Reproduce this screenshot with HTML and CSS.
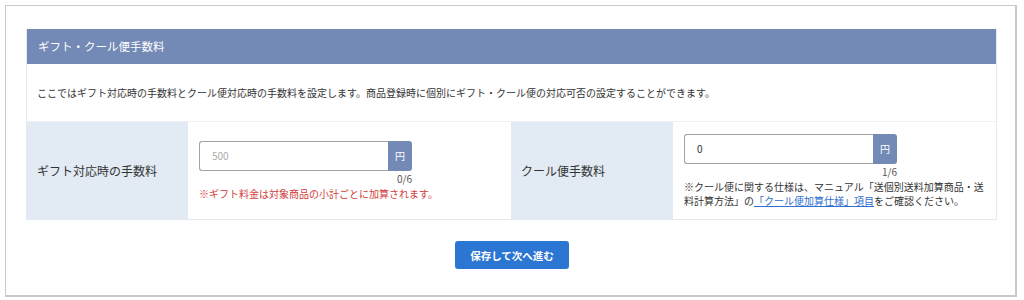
FILE: index.html
```html
<!DOCTYPE html>
<html lang="ja">
<head>
    <meta charset="UTF-8">
    <meta name="viewport" content="width=device-width, initial-scale=1.0">
    <title>ギフト・クール便手数料</title>
    <link rel="stylesheet" href="styles.css">
</head>
<body>
    <div class="frame">
        <!-- Fee settings panel -->
        <div class="panel">
            <div class="panel-head">ギフト・クール便手数料</div>
            <div class="panel-desc">ここではギフト対応時の手数料とクール便対応時の手数料を設定します。商品登録時に個別にギフト・クール便の対応可否の設定することができます。</div>
            <div class="fee-row">
                <div class="fee-label">ギフト対応時の手数料</div>
                <div class="fee-field">
                    <div class="field-box">
                        <div class="input-group">
                            <input type="text" class="fee-input" placeholder="500">
                            <span class="unit">円</span>
                        </div>
                        <div class="counter">0/6</div>
                    </div>
                    <p class="note note-red">※ギフト料金は対象商品の小計ごとに加算されます。</p>
                </div>
                <div class="fee-label">クール便手数料</div>
                <div class="fee-field">
                    <div class="field-box">
                        <div class="input-group">
                            <input type="text" class="fee-input" value="0">
                            <span class="unit">円</span>
                        </div>
                        <div class="counter">1/6</div>
                    </div>
                    <p class="note">※クール便に関する仕様は、マニュアル「送個別送料加算商品・送料計算方法」の<a href="#">「クール便加算仕様」項目</a>をご確認ください。</p>
                </div>
            </div>
        </div>

        <div class="actions">
            <button class="save-button">保存して次へ進む</button>
        </div>
    </div>
</body>
</html>
```

FILE: styles.css
```css
body {
    margin: 0;
    font-family: "Noto Sans CJK JP", "Noto Sans", sans-serif;
    color: #333;
    background: #fff;
}

.frame {
    margin: 5px;
    width: 1012px;
    height: 292px;
    border: 1px solid #c9c9c9;
    border-right-width: 2px;
    border-bottom-width: 2px;
    box-sizing: border-box;
    padding: 23px 20px 0 20px;
}

.panel {
    width: 971px;
    border: 1px solid #e6eaf0;
    border-top: none;
    box-sizing: border-box;
}

.panel-head {
    height: 35px;
    line-height: 35px;
    padding-left: 11px;
    background: #7389b6;
    color: #fff;
    font-size: 11.5px;
}

.panel-desc {
    height: 57px;
    line-height: 57px;
    padding-left: 10px;
    font-size: 10px;
    color: #333;
    border-bottom: 1px solid #eceff3;
    white-space: nowrap;
}

.fee-row {
    display: grid;
    grid-template-columns: 161px 323px 162px 1fr;
    height: 97px;
}

.fee-label {
    background: #e2ebf4;
    display: flex;
    align-items: center;
    padding-left: 10px;
    font-size: 12px;
    color: #333;
}

.fee-field {
    display: flex;
    flex-direction: column;
    justify-content: center;
    padding: 0 10px 0 11px;
}

.field-box {
    width: 213px;
}

.input-group {
    display: flex;
    height: 30px;
}

.fee-input {
    width: 189px;
    height: 30px;
    box-sizing: border-box;
    border: 1px solid #a3a3a3;
    border-right: none;
    border-radius: 3px 0 0 3px;
    padding: 0 12px;
    font-family: inherit;
    font-size: 10px;
    color: #333;
    outline: none;
}

.fee-input::placeholder {
    color: #aaa;
}

.unit {
    width: 24px;
    background: #7389b6;
    color: #fff;
    font-size: 10px;
    display: flex;
    align-items: center;
    justify-content: center;
    border-radius: 0 3px 3px 0;
}

.counter {
    text-align: right;
    font-size: 10px;
    color: #555;
    line-height: 16px;
}

.note {
    margin: 0;
    font-size: 10px;
    line-height: 14px;
    color: #333;
}

.note-red {
    color: #d23b3b;
}

.note a {
    color: #2f6fce;
}

.actions {
    display: flex;
    justify-content: center;
    padding-top: 21px;
    padding-left: 3px;
}

.save-button {
    width: 114px;
    height: 28px;
    background: #2b76d3;
    color: #fff;
    border: none;
    border-radius: 3px;
    font-family: inherit;
    font-size: 10.5px;
    font-weight: bold;
    cursor: pointer;
}
```
